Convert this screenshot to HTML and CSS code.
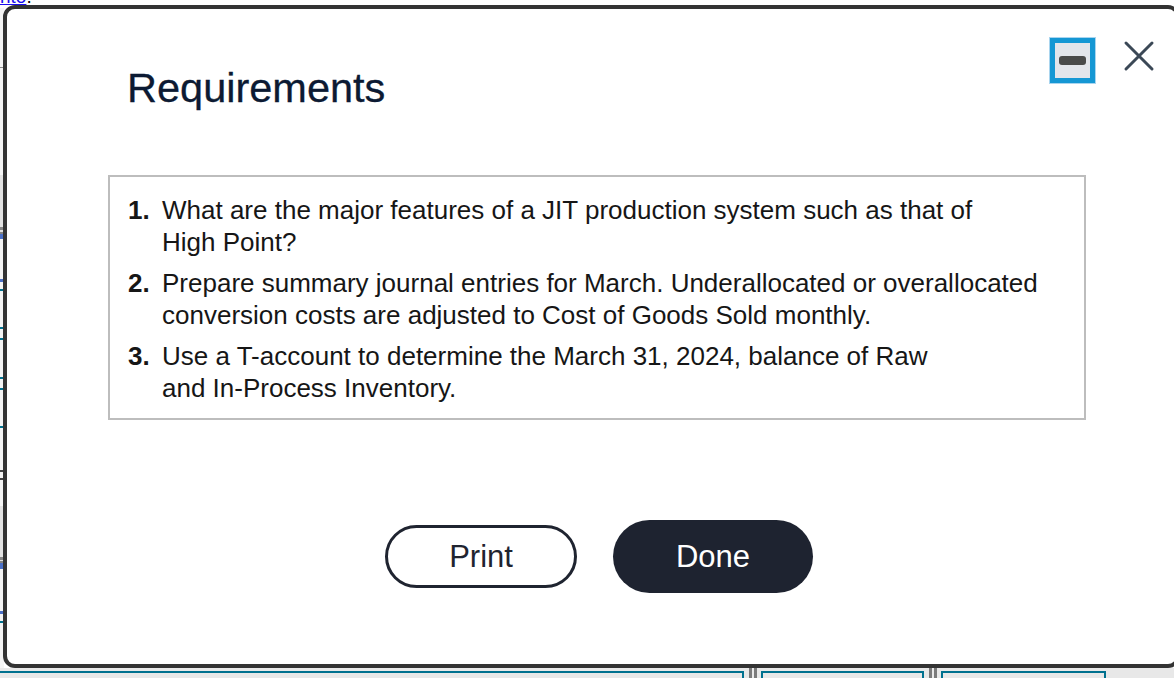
FILE: index.html
```html
<!DOCTYPE html>
<html lang="en">
<head>
<meta charset="utf-8">
<title>Requirements</title>
<link rel="stylesheet" href="styles.css">
</head>
<body>
<div class="page">
  <div class="page-top"><p class="page-link-line"><a class="page-link" href="#">nto</a>.</p></div>
  <div class="page-middle">
    <div class="page-sliver"></div>
    <div class="page-fill"></div>
  </div>
  <div class="page-bottom">
    <div class="tab tab-first"></div>
    <div class="grip"><span></span><span></span></div>
    <div class="tab tab-second"></div>
    <div class="grip"><span></span><span></span></div>
    <div class="tab tab-third"></div>
  </div>
</div>

<div class="modal" role="dialog" aria-labelledby="modal-title">
  <div class="modal-header">
    <h1 class="modal-title" id="modal-title">Requirements</h1>
    <div class="modal-controls">
      <button class="ctrl-min" aria-label="Minimize"><span class="ctrl-min-bar"></span></button>
      <button class="ctrl-close" aria-label="Close">
        <svg width="32" height="32" viewBox="0 0 32 32"><path d="M3 3 L29 29 M29 3 L3 29" fill="none" stroke="#3b4856" stroke-width="3" stroke-linecap="round"/></svg>
      </button>
    </div>
  </div>

  <div class="req-box">
    <ol class="req-list">
      <li class="req-item"><span class="req-num">1.</span><span class="req-text">What are the major features of a JIT production system such as that of<br>High Point?</span></li>
      <li class="req-item"><span class="req-num">2.</span><span class="req-text">Prepare summary journal entries for March. Underallocated or overallocated<br>conversion costs are adjusted to Cost of Goods Sold monthly.</span></li>
      <li class="req-item"><span class="req-num">3.</span><span class="req-text">Use a T-account to determine the March 31, 2024, balance of Raw<br>and In-Process Inventory.</span></li>
    </ol>
  </div>

  <div class="modal-actions">
    <button class="btn btn-outline">Print</button>
    <button class="btn btn-solid">Done</button>
  </div>
</div>
</body>
</html>
```
FILE: styles.css
```css
* { box-sizing: border-box; }

html, body {
  margin: 0;
  padding: 0;
  width: 1174px;
  height: 678px;
  overflow: hidden;
  background: #ffffff;
  font-family: "Liberation Sans", Arial, Helvetica, sans-serif;
}

/* ---------- background page ---------- */
.page {
  display: flex;
  flex-direction: column;
  height: 678px;
}

.page-top {
  height: 8px;
  overflow: hidden;
}

.page-link-line {
  margin: -13px 0 0 0;
  font-size: 19px;
  line-height: 20px;
  color: #000;
}

.page-link {
  color: #1a0dee;
  text-decoration: underline;
}

.page-middle {
  flex: 1;
  display: flex;
}

.page-sliver {
  width: 4px;
  background: linear-gradient(to bottom,
    #f4f4f4 0px, #f4f4f4 59px,
    #8a8a8a 59px, #8a8a8a 60px,
    #f4f4f4 60px, #f4f4f4 167px,
    #e2e2e2 167px, #e2e2e2 219px,
    #858585 219px, #858585 222px,
    #e2e2e2 222px, #e2e2e2 224px,
    #858585 224px, #858585 226px,
    #4b70c6 226px, #4b70c6 231px,
    #f4f4f4 231px, #f4f4f4 271px,
    #4b70c6 271px, #4b70c6 274px,
    #f4f4f4 274px, #f4f4f4 281px,
    #00718f 281px, #00718f 283px,
    #f4f4f4 283px, #f4f4f4 319px,
    #00718f 319px, #00718f 321px,
    #f4f4f4 321px, #f4f4f4 330px,
    #00718f 330px, #00718f 332px,
    #f4f4f4 332px, #f4f4f4 369px,
    #00718f 369px, #00718f 371px,
    #f4f4f4 371px, #f4f4f4 380px,
    #00718f 380px, #00718f 382px,
    #f4f4f4 382px, #f4f4f4 418px,
    #00718f 418px, #00718f 420px,
    #f4f4f4 420px, #f4f4f4 462px,
    #444444 462px, #444444 464px,
    #f4f4f4 464px, #f4f4f4 470px,
    #444444 470px, #444444 472px,
    #f4f4f4 472px, #f4f4f4 498px,
    #e2e2e2 498px, #e2e2e2 549px,
    #858585 549px, #858585 552px,
    #e2e2e2 552px, #e2e2e2 553px,
    #858585 553px, #858585 555px,
    #4b70c6 555px, #4b70c6 561px,
    #f4f4f4 561px, #f4f4f4 603px,
    #4b70c6 603px, #4b70c6 606px,
    #f4f4f4 606px, #f4f4f4 613px,
    #00718f 613px, #00718f 615px,
    #f4f4f4 615px);
}

.page-fill { flex: 1; }

.page-bottom {
  height: 10px;
  display: flex;
  align-items: flex-start;
  background: #e8e8e8;
}

.tab {
  height: 10px;
  margin-top: 3px;
  border: 2px solid #00718f;
  border-bottom: none;
  background: #e8e8e8;
}

.tab-first { width: 754px; margin-left: -10px; }
.tab-second { width: 163px; margin-left: 4px; }
.tab-third { width: 165px; margin-left: 4px; }

.grip {
  display: flex;
  gap: 2px;
  height: 10px;
  margin-left: 5px;
}

.grip span {
  width: 3px;
  height: 10px;
  background: #7a7a7a;
}

/* ---------- modal ---------- */
.modal {
  position: absolute;
  left: 3px;
  top: 5px;
  width: 1177px;
  height: 663px;
  border: 4px solid #333333;
  border-radius: 12px;
  background: #ffffff;
  display: flex;
  flex-direction: column;
}

.modal-header {
  display: flex;
  align-items: flex-start;
  padding: 28px 21px 0 120px;
}

.modal-title {
  margin: 27px 0 0 0;
  font-size: 41.5px;
  line-height: 48px;
  font-weight: normal;
  color: #0c1a33;
  letter-spacing: 0;
  -webkit-text-stroke: 0.3px #0c1a33;
}

.modal-controls {
  margin-left: auto;
  display: flex;
  align-items: flex-start;
  gap: 27px;
}

.ctrl-min {
  width: 45px;
  height: 45px;
  margin: 1px;
  padding: 0;
  border: 5px solid #1597d4;
  box-shadow: 0 0 0 1px #a9d5ef;
  background: #e3e5eb;
  display: flex;
  align-items: center;
  justify-content: center;
}

.ctrl-min-bar {
  width: 27px;
  height: 9px;
  border-radius: 3px;
  background: #4a4a4a;
}

.ctrl-close {
  margin-top: 3px;
  padding: 0;
  border: none;
  background: none;
  width: 32px;
  height: 32px;
  display: block;
}

.ctrl-close svg { display: block; }

/* ---------- requirements box ---------- */
.req-box {
  margin: 63px 0 0 101px;
  width: 978px;
  height: 245px;
  border: 2px solid #bdbdbd;
  padding: 17px 18px 15px 18px;
}

.req-list {
  list-style: none;
  margin: 0;
  padding: 0;
  display: flex;
  flex-direction: column;
  gap: 9px;
}

.req-item {
  display: grid;
  grid-template-columns: 34px 1fr;
  font-size: 26px;
  line-height: 32px;
  color: #161616;
  white-space: nowrap;
}

.req-num { font-weight: bold; }

/* ---------- actions ---------- */
.modal-actions {
  display: flex;
  align-items: center;
  gap: 36px;
  margin-top: 100px;
  padding-left: 378px;
}

.btn {
  font-family: "Liberation Sans", Arial, Helvetica, sans-serif;
  font-size: 31px;
  line-height: 1;
  padding: 0;
  cursor: pointer;
}

.btn-outline {
  width: 192px;
  height: 63px;
  border: 3px solid #1f2430;
  border-radius: 32px;
  background: #ffffff;
  color: #1f2430;
}

.btn-solid {
  width: 200px;
  height: 73px;
  border: none;
  border-radius: 37px;
  background: #1e2330;
  color: #ffffff;
}
```
